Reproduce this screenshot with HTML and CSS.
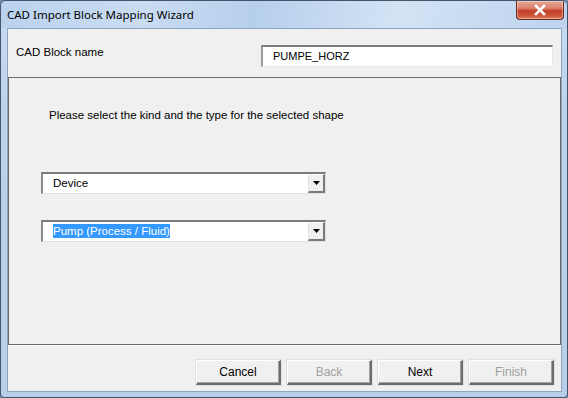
FILE: index.html
```html
<!DOCTYPE html>
<html>
<head>
<meta charset="utf-8">
<link rel="stylesheet" href="styles.css">
</head>
<body>
<div class="window">
  <div class="titlebar">
    <span class="title">CAD Import Block Mapping Wizard</span>
    <div class="close">
      <svg width="14" height="12" viewBox="0 0 14 12"><path d="M3 2 L11 10 M11 2 L3 10" stroke="#fff" stroke-width="2.6" stroke-linecap="square"/></svg>
    </div>
  </div>
  <div class="client">
    <div class="top">
      <span class="label">CAD Block name</span>
      <div class="textbox">PUMPE_HORZ</div>
    </div>
    <div class="panel">
      <p class="prompt">Please select the kind and the type for the selected shape</p>
      <div class="combo first">
        <span class="value">Device</span>
        <span class="drop"><svg width="7" height="4" viewBox="0 0 7 4"><path d="M0 0 H7 L3.5 4 Z" fill="#000"/></svg></span>
      </div>
      <div class="combo second">
        <span class="value"><span class="sel">Pump (Process / Fluid)</span></span>
        <span class="drop"><svg width="7" height="4" viewBox="0 0 7 4"><path d="M0 0 H7 L3.5 4 Z" fill="#000"/></svg></span>
      </div>
    </div>
    <div class="buttons">
      <div class="btn">Cancel</div>
      <div class="btn disabled">Back</div>
      <div class="btn">Next</div>
      <div class="btn disabled">Finish</div>
    </div>
  </div>
</div>
</body>
</html>
```
FILE: styles.css
```css
* {
  box-sizing: border-box;
}
html, body {
  margin: 0;
  padding: 0;
  background: #6f8aa8;
}
.window {
  width: 568px;
  height: 398px;
  border: 1px solid #44556b;
  border-radius: 6px 6px 4px 4px;
  background: linear-gradient(180deg, #c8dcf1 0%, #bcd2ec 30%, #b8cfe9 100%);
  display: flex;
  flex-direction: column;
  overflow: hidden;
  font-family: "Liberation Sans", Arial, sans-serif;
  font-size: 11.5px;
  color: #000;
}
.titlebar {
  height: 27px;
  flex: none;
  display: flex;
  align-items: flex-start;
  justify-content: space-between;
  background: linear-gradient(100deg, #bad2ee 0%, #c9dcf2 25%, #b6cfec 45%, #d3e3f5 70%, #bdd3ee 100%);
}
.title {
  font-family: "Noto Sans", sans-serif;
  font-size: 11.5px;
  color: #000;
  margin: 6px 0 0 6px;
  line-height: 16px;
}
.close {
  width: 48px;
  height: 19px;
  margin-right: 3px;
  border: 1px solid #6e2a22;
  border-top: none;
  border-radius: 0 0 4px 4px;
  background: linear-gradient(180deg, #e7a898 0%, #d9806c 40%, #c43d25 55%, #cf5a3e 85%, #e08868 100%);
  display: flex;
  align-items: center;
  justify-content: center;
  box-shadow: inset 0 0 0 1px rgba(255,255,255,0.35);
}
.client {
  flex: 1;
  margin: 0 5px 5px 6px;
  border: 1px solid #8ea3bd;
  background: #f0f0f0;
  display: flex;
  flex-direction: column;
}
.top {
  height: 48px;
  flex: none;
  display: flex;
  align-items: flex-start;
  justify-content: space-between;
  padding: 0 8px 0 8px;
}
.label {
  margin-top: 16px;
  line-height: 14px;
}
.textbox {
  margin-top: 16px;
  width: 292px;
  height: 22px;
  background: #fff;
  border-style: solid;
  border-width: 2px 1px 1px 2px;
  border-color: #7a7a7a #e8e8e8 #e8e8e8 #9a9a9a;
  padding-left: 10px;
  line-height: 18px;
  font-size: 11px;
}
.panel {
  flex: 1;
  border: 1px solid #696969;
  box-shadow: 0 1px 0 #fff;
  padding: 0 0 0 32px;
  display: flex;
  flex-direction: column;
  align-items: flex-start;
}
.prompt {
  margin: 30px 0 0 8px;
  line-height: 14px;
}
.combo {
  width: 285px;
  height: 22px;
  background: #fff;
  border-style: solid;
  border-width: 2px 1px 1px 2px;
  border-color: #7a7a7a #e0e0e0 #e0e0e0 #8a8a8a;
  display: flex;
  align-items: stretch;
}
.combo.first { margin-top: 50px; }
.combo.second { margin-top: 26px; }
.value {
  flex: 1;
  padding-left: 10px;
  line-height: 18px;
}
.sel {
  background: #3399ff;
  color: #fff;
  padding: 1px 0;
}
.drop {
  width: 17px;
  flex: none;
  background: #f0f0f0;
  border-style: solid;
  border-width: 1px 2px 2px 1px;
  border-color: #ffffff #7a7a7a #7a7a7a #e3e3e3;
  display: flex;
  align-items: center;
  justify-content: center;
}
.buttons {
  height: 46px;
  flex: none;
  display: flex;
  justify-content: flex-end;
  align-items: flex-start;
  gap: 6px;
  padding: 15px 7px 0 0;
}
.btn {
  width: 85px;
  height: 25px;
  background: #f0f0f0;
  border-style: solid;
  border-width: 1px 2px 2px 1px;
  border-color: #ffffff #6d6d6d #6d6d6d #ffffff;
  box-shadow: inset -1px -1px 0 #a0a0a0, 0 0 0 1px #e0e0e0;
  display: flex;
  align-items: center;
  justify-content: center;
  font-size: 12px;
}
.btn.disabled {
  color: #a0a0a0;
}
```
